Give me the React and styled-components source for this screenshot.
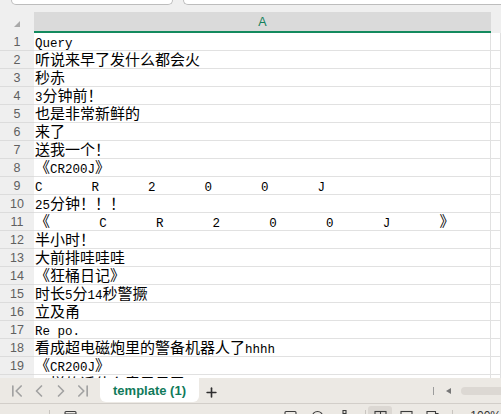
import React from "react";
import styled, { createGlobalStyle } from "styled-components";
import { ChevronFirst, ChevronLeft, ChevronRight, ChevronLast, Plus } from "lucide-react";

const GlobalStyle = createGlobalStyle`
  html, body {
    margin: 0;
    padding: 0;
    overflow: hidden;
    background: #efefef;
  }
`;

const rows = [
  { text: "Query" },
  { text: "听说来早了发什么都会火" },
  { text: "秒赤" },
  { text: "3分钟前！" },
  { text: "也是非常新鲜的" },
  { text: "来了" },
  { text: "送我一个！" },
  { text: "《CR200J》" },
  { text: "CR200J", spacing: 49 },
  { text: "25分钟！！！" },
  { text: "《CR200J》", spacing: 49.2 },
  { text: "半小时！" },
  { text: "大前排哇哇哇" },
  { text: "《狂桶日记》" },
  { text: "时长5分14秒警撅" },
  { text: "立及甬" },
  { text: "Re po." },
  { text: "看成超电磁炮里的警备机器人了hhhh" },
  { text: "《CR200J》" },
  { text: "一样的话什么意思日了" },
];

const isLatin = (s) => /^[\x20-\x7e]+$/.test(s);

const renderRuns = (text) =>
  text
    .split(/([\x20-\x7e]+)/)
    .filter(Boolean)
    .map((run, i) => (isLatin(run) ? <Latin key={i}>{run}</Latin> : <span key={i}>{run}</span>));

const App = () => {
  return (
    <Page>
      <GlobalStyle />
      <TopStrip>
        <NameBox />
        <FormulaBox />
      </TopStrip>

      <Sheet>
        <Corner>
          <svg width="6" height="6" viewBox="0 0 6 6">
            <polygon points="6,0 6,6 0,6" fill="#a9a9a9" />
          </svg>
        </Corner>
        <ColHeader $selected>A</ColHeader>
        <ColHeader />
        {rows.map((row, i) => (
          <React.Fragment key={i}>
            <RowHeader>{i + 1}</RowHeader>
            <Cell style={row.spacing ? { letterSpacing: `${row.spacing}px` } : undefined}>{renderRuns(row.text)}</Cell>
            <Cell />
          </React.Fragment>
        ))}
      </Sheet>

      <TabBar>
        <NavGroup>
          <NavButton>
            <ChevronFirst size={20} strokeWidth={2} />
          </NavButton>
          <NavButton>
            <ChevronLeft size={20} strokeWidth={2} />
          </NavButton>
          <NavButton>
            <ChevronRight size={20} strokeWidth={2} />
          </NavButton>
          <NavButton>
            <ChevronLast size={20} strokeWidth={2} />
          </NavButton>
        </NavGroup>
        <SheetTab>template (1)</SheetTab>
        <AddButton>
          <Plus size={15} strokeWidth={2.6} />
        </AddButton>
        <ScrollArea>
          <Divider />
          <svg width="6" height="6" viewBox="0 0 6 6">
            <polygon points="5,0 5,6 0,3" fill="#777" />
          </svg>
          <Thumb />
        </ScrollArea>
      </TabBar>

      <StatusBar>
        <StatusText>就绪</StatusText>
        <StatusSep />
        <StatusIcon viewBox="0 0 13 13">
          <rect x="1" y="1.5" width="11" height="10" rx="1" />
          <line x1="1" y1="4" x2="12" y2="4" />
        </StatusIcon>
        <Spacer />
        <StatusIcon viewBox="0 0 13 13">
          <rect x="1" y="1.5" width="11" height="10" rx="1" />
          <line x1="1" y1="5" x2="12" y2="5" />
        </StatusIcon>
        <StatusIcon viewBox="0 0 13 13">
          <circle cx="6.5" cy="7" r="5.5" />
        </StatusIcon>
        <StatusIcon viewBox="0 0 13 13">
          <rect x="5" y="0.5" width="3" height="3" />
          <line x1="1" y1="5" x2="12" y2="5" />
          <line x1="6.5" y1="3.5" x2="6.5" y2="12" />
        </StatusIcon>
        <StatusSep $wide />
        <ViewButton $active>
          <StatusIcon viewBox="0 0 13 13">
            <rect x="1" y="1.5" width="11" height="10" />
            <line x1="1" y1="5" x2="12" y2="5" />
            <line x1="6.5" y1="1.5" x2="6.5" y2="11.5" />
          </StatusIcon>
        </ViewButton>
        <ViewButton>
          <StatusIcon viewBox="0 0 13 13">
            <rect x="1" y="1.5" width="11" height="10" />
            <line x1="1" y1="5" x2="12" y2="5" />
            <line x1="6.5" y1="5" x2="6.5" y2="11.5" />
          </StatusIcon>
        </ViewButton>
        <ViewButton>
          <StatusIcon viewBox="0 0 13 13">
            <path d="M1 1.5h8.5v10H1z" />
            <path d="M9.5 3.5H12V11.5" />
          </StatusIcon>
        </ViewButton>
        <StatusSep />
        <Zoom>100%</Zoom>
      </StatusBar>
    </Page>
  );
};

export default App;

const Page = styled.div`
  display: flex;
  flex-direction: column;
  width: 501px;
  background: #efefef;
`;

const TopStrip = styled.div`
  display: flex;
  gap: 10px;
  height: 12px;
  padding-left: 11px;
  flex-shrink: 0;
`;

const NameBox = styled.div`
  width: 160px;
  height: 4px;
  background: #ffffff;
  border: 1px solid #bdbdbd;
  border-top: none;
  border-radius: 0 0 5px 5px;
`;

const FormulaBox = styled(NameBox)`
  flex: 1;
  width: auto;
  border-right: none;
  border-radius: 0 0 0 5px;
`;

const Sheet = styled.div`
  display: grid;
  grid-template-columns: 34px 457px 1fr;
  grid-template-rows: 21px;
  grid-auto-rows: 18px;
  height: 366px;
  overflow: hidden;
  flex-shrink: 0;
`;

const Corner = styled.div`
  display: flex;
  align-items: center;
  justify-content: center;
  padding-top: 2px;
  background: #efefef;
`;

const ColHeader = styled.div`
  display: flex;
  align-items: center;
  justify-content: center;
  box-sizing: border-box;
  background: ${(p) => (p.$selected ? "#dadada" : "#efefef")};
  border-bottom: 2px solid ${(p) => (p.$selected ? "#138a5e" : "transparent")};
  color: #12805a;
  font-family: "Liberation Sans", Arial, sans-serif;
  font-size: 12.5px;
  padding-top: 1px;
`;

const RowHeader = styled.div`
  display: flex;
  align-items: center;
  justify-content: center;
  box-sizing: border-box;
  background: #efefef;
  border-bottom: 1px solid #dcdcdc;
  color: #5f5f5f;
  font-family: "Liberation Sans", Arial, sans-serif;
  font-size: 12.5px;
`;

const Cell = styled.div`
  box-sizing: border-box;
  background: #ffffff;
  border-bottom: 1px solid #e1e1e1;
  border-right: 1px solid #e1e1e1;
  padding-left: 1px;
  font-family: "Noto Sans CJK SC", sans-serif;
  font-size: 15px;
  line-height: 16px;
  color: #000000;
  white-space: pre;
`;

const Latin = styled.span`
  font-family: "Liberation Mono", monospace;
  font-size: 12.5px;
  line-height: 1;
`;

const TabBar = styled.div`
  display: flex;
  align-items: stretch;
  height: 25px;
  background: #ece9e4;
  flex-shrink: 0;
`;

const NavGroup = styled.div`
  display: flex;
  align-items: center;
  padding-left: 6px;
  width: 100px;
  box-sizing: border-box;
`;

const NavButton = styled.div`
  display: flex;
  align-items: center;
  justify-content: center;
  width: 22px;
  color: #a2a2a2;
`;

const SheetTab = styled.div`
  display: flex;
  align-items: center;
  justify-content: center;
  width: 99px;
  margin-bottom: 1px;
  background: #ffffff;
  border-radius: 0 0 6px 6px;
  color: #107a5a;
  font-family: "Liberation Sans", Arial, sans-serif;
  font-weight: 700;
  font-size: 13px;
`;

const AddButton = styled.div`
  display: flex;
  align-items: center;
  justify-content: center;
  width: 24px;
  padding-top: 3px;
  color: #2f2f2f;
`;

const ScrollArea = styled.div`
  display: flex;
  align-items: center;
  margin-left: auto;
  padding-top: 1px;
`;

const Divider = styled.div`
  width: 1.5px;
  height: 8px;
  background: #9c9c9c;
  margin-right: 12px;
`;

const Thumb = styled.div`
  width: 50px;
  height: 8px;
  margin-left: 9px;
  margin-right: -10px;
  border-radius: 4px;
  background: #dcd8d3;
`;

const StatusBar = styled.div`
  display: flex;
  align-items: center;
  height: 24px;
  border-top: 1px solid #d2cec9;
  background: #ece9e4;
  padding-left: 15px;
  gap: 14px;
`;

const StatusText = styled.span`
  font-family: "Noto Sans CJK SC", sans-serif;
  font-size: 10px;
  color: #333;
  margin-top: 4px;
`;

const StatusSep = styled.div`
  width: 1px;
  height: 14px;
  margin-top: 2px;
  background: #c9c5c0;
  margin-right: ${(p) => (p.$wide ? "-6px" : "0")};
`;

const StatusIcon = styled.svg`
  width: 13px;
  height: 13px;
  fill: none;
  stroke: #3c3c3c;
  stroke-width: 1.1;
  flex-shrink: 0;
`;

const Spacer = styled.div`
  flex: 1;
`;

const ViewButton = styled.div`
  display: flex;
  align-items: center;
  justify-content: center;
  width: 24px;
  height: 20px;
  margin: 0 -6px;
  border-radius: 3px;
  background: ${(p) => (p.$active ? "#dcd8d3" : "transparent")};
`;

const Zoom = styled.span`
  font-family: "Liberation Sans", Arial, sans-serif;
  font-size: 12px;
  color: #333;
  margin-left: 3px;
`;
